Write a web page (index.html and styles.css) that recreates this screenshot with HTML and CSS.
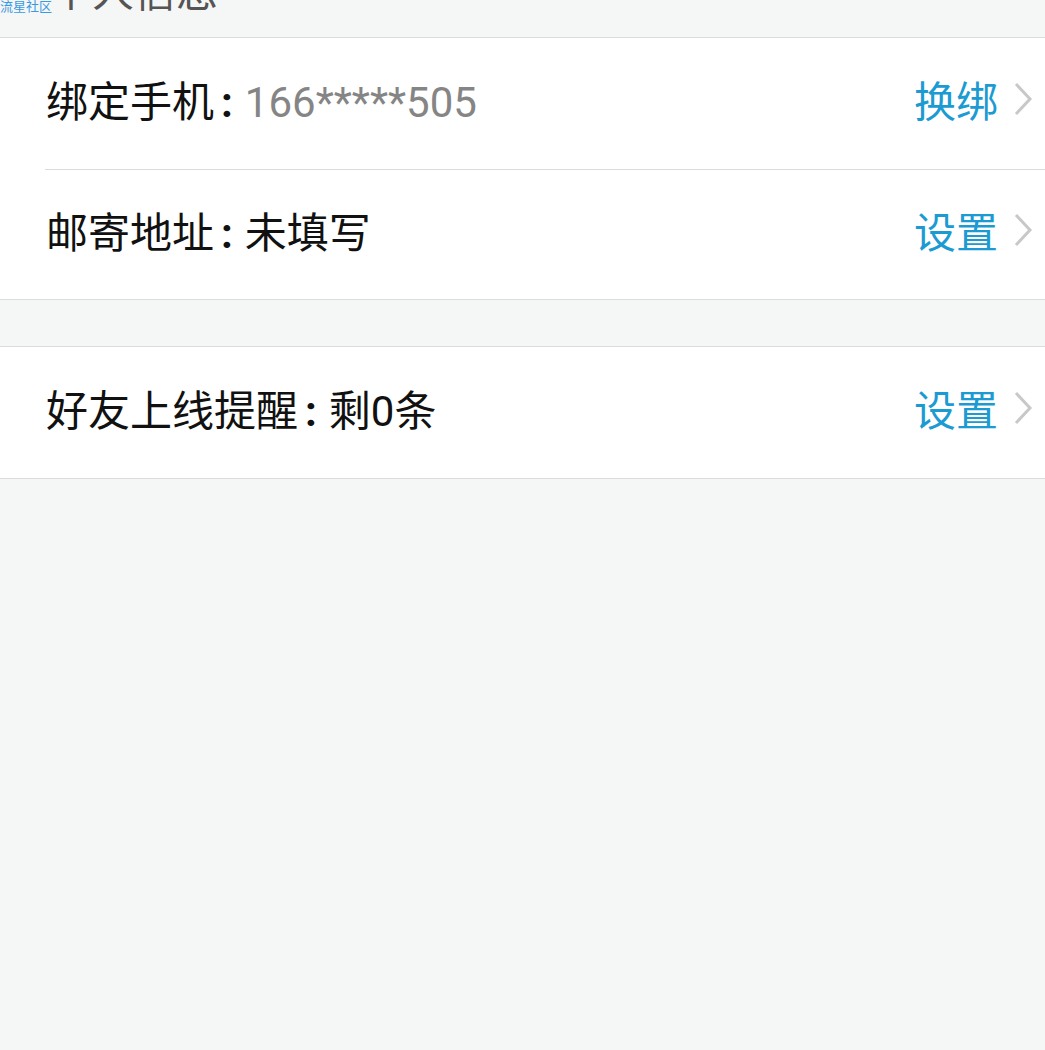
FILE: index.html
```html
<!DOCTYPE html>
<html lang="zh-CN">
	<head>
		<title>个人信息</title>
		<link rel="stylesheet" href="styles.css">
	</head>

	<body>
		<div class="page">
			<div class="topbar">
				<span class="watermark">流星社区</span>
				<h1 class="title">个人信息</h1>
			</div>

			<div class="group">
				<div class="row">
					<span class="label">绑定手机<span class="colon">:</span><span class="muted">166*****505</span></span>
					<span class="action">换绑</span>
					<svg class="chevron" width="20" height="34" viewBox="0 0 20 34"><polyline points="3,2 17,17 3,32" /></svg>
				</div>
				<div class="row">
					<span class="label">邮寄地址<span class="colon">:</span>未填写</span>
					<span class="action">设置</span>
					<svg class="chevron" width="20" height="34" viewBox="0 0 20 34"><polyline points="3,2 17,17 3,32" /></svg>
				</div>
			</div>

			<div class="group">
				<div class="row">
					<span class="label">好友上线提醒<span class="colon">:</span>剩0条</span>
					<span class="action">设置</span>
					<svg class="chevron" width="20" height="34" viewBox="0 0 20 34"><polyline points="3,2 17,17 3,32" /></svg>
				</div>
			</div>
		</div>
	</body>
</html>
```

FILE: styles.css
```css
/* general styling */
* {
	box-sizing: border-box;
	margin: 0;
	padding: 0;
}

html, body {
	height: 100%;
}

body {
	background-color: #f5f6f6;
	color: #111;
	font-family: Roboto, "Noto Sans CJK SC", sans-serif;
	overflow: hidden;
}

.topbar {
	border-bottom: 1px solid #dcdcdc;
	height: 38px;
	overflow: hidden;
	position: relative;
}

.watermark {
	color: #3a9ae0;
	font-size: 13px;
	left: 0;
	line-height: 14px;
	position: absolute;
	top: 0;
}

.title {
	color: #555;
	font-size: 42px;
	font-weight: normal;
	line-height: 42px;
	margin-top: -28px;
	padding-left: 50px;
}

.group {
	background: #fff;
	border-bottom: 1px solid #dcdcdc;
}

.group + .group {
	border-top: 1px solid #dcdcdc;
	margin-top: 46px;
}

.row {
	align-items: center;
	display: flex;
	height: 131px;
	margin-left: 45px;
	padding-bottom: 10px;
	padding-right: 12px;
}

.row + .row {
	border-top: 1px solid #dcdcdc;
	height: 130px;
}

.label {
	flex: 1;
	font-size: 42px;
	padding-left: 1px;
}

.colon {
	font-weight: bold;
	padding: 0 12px 0 7px;
}

.muted {
	color: #858585;
}

.action {
	color: #1b9bd1;
	font-size: 42px;
	margin-right: 15px;
}

.chevron polyline {
	fill: none;
	stroke: #c8c8c8;
	stroke-width: 3;
}
```
